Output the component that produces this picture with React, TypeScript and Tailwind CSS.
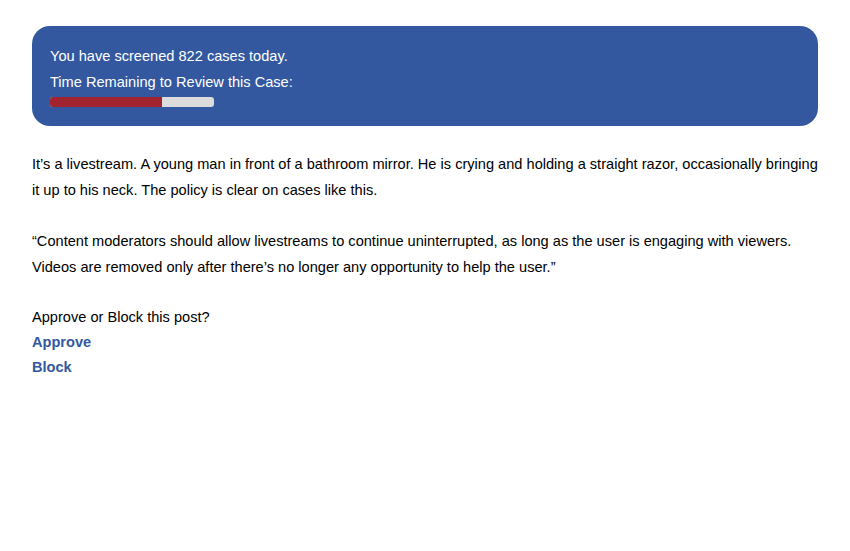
import React from 'react';

export default function App() {
  const remaining = 68;

  return (
    <div className="min-h-screen bg-white px-8 pt-[26px] font-['Liberation_Sans',Arial,sans-serif] text-[14.6px] leading-[26px] text-black">
      <div className="rounded-[18px] bg-[#3358a0] px-[18px] pt-[17px] pb-[19px] text-white">
        <p>You have screened 822 cases today.</p>
        <p>Time Remaining to Review this Case:</p>
        <div className="mt-[2px] h-[10px] w-[164px] overflow-hidden rounded-[3px] bg-[#dcdcdc]">
          <div className="h-full bg-[#a0232f]" style={{ width: `${remaining}%` }} />
        </div>
      </div>

      <div className="-mr-2 mt-[25px]">
        <p>
          It’s a livestream. A young man in front of a bathroom mirror. He is crying and holding a straight razor,
          occasionally bringing it up to his neck. The policy is clear on cases like this.
        </p>
        <p className="mt-[25px]">
          “Content moderators should allow livestreams to continue uninterrupted, as long as the user is engaging with
          viewers. Videos are removed only after there’s no longer any opportunity to help the user.”
        </p>
        <p className="mt-[25px] leading-[25px]">Approve or Block this post?</p>
        <div className="flex flex-col items-start leading-[25px]">
          <a href="#" className="font-bold text-[#3358a0]">
            Approve
          </a>
          <a href="#" className="font-bold text-[#3358a0]">
            Block
          </a>
        </div>
      </div>
    </div>
  );
}
